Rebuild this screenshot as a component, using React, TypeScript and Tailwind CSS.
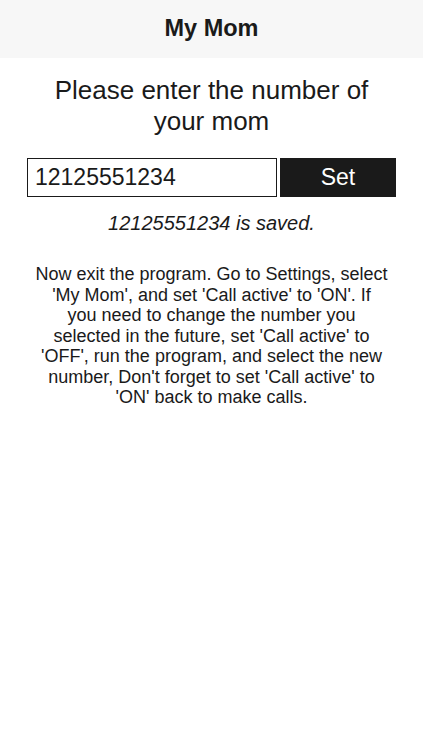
export default function App() {
  return (
    <div className="min-h-[750px] bg-white text-[#1a1a1a]" style={{ fontFamily: '"Liberation Sans", Arial, sans-serif' }}>
      <header className="h-[58px] bg-[#f7f7f7] flex items-center justify-center">
        <h1 className="text-[23.5px] font-bold">My Mom</h1>
      </header>

      <h2 className="mt-[17px] text-[26px] leading-[31px] text-center px-12">
        Please enter the number of your mom
      </h2>

      <div className="mt-[21px] flex gap-[3px] pl-[27px] pr-[27px]">
        <input
          className="w-[250px] h-[39px] border border-[#1a1a1a] px-[7px] text-[23px] outline-none"
          defaultValue="12125551234"
        />
        <button className="w-[116px] h-[39px] bg-[#1a1a1a] text-white text-[23px]">Set</button>
      </div>

      <p className="mt-[11px] text-center italic text-[20px]">12125551234 is saved.</p>

      <p className="mt-[26px] px-[20px] text-center text-[18px] leading-[20.5px]">
        Now exit the program. Go to Settings, select
        <br />
        'My Mom', and set 'Call active' to 'ON'. If
        <br />
        you need to change the number you
        <br />
        selected in the future, set 'Call active' to
        <br />
        'OFF', run the program, and select the new
        <br />
        number, Don't forget to set 'Call active' to
        <br />
        'ON' back to make calls.
      </p>
    </div>
  )
}
